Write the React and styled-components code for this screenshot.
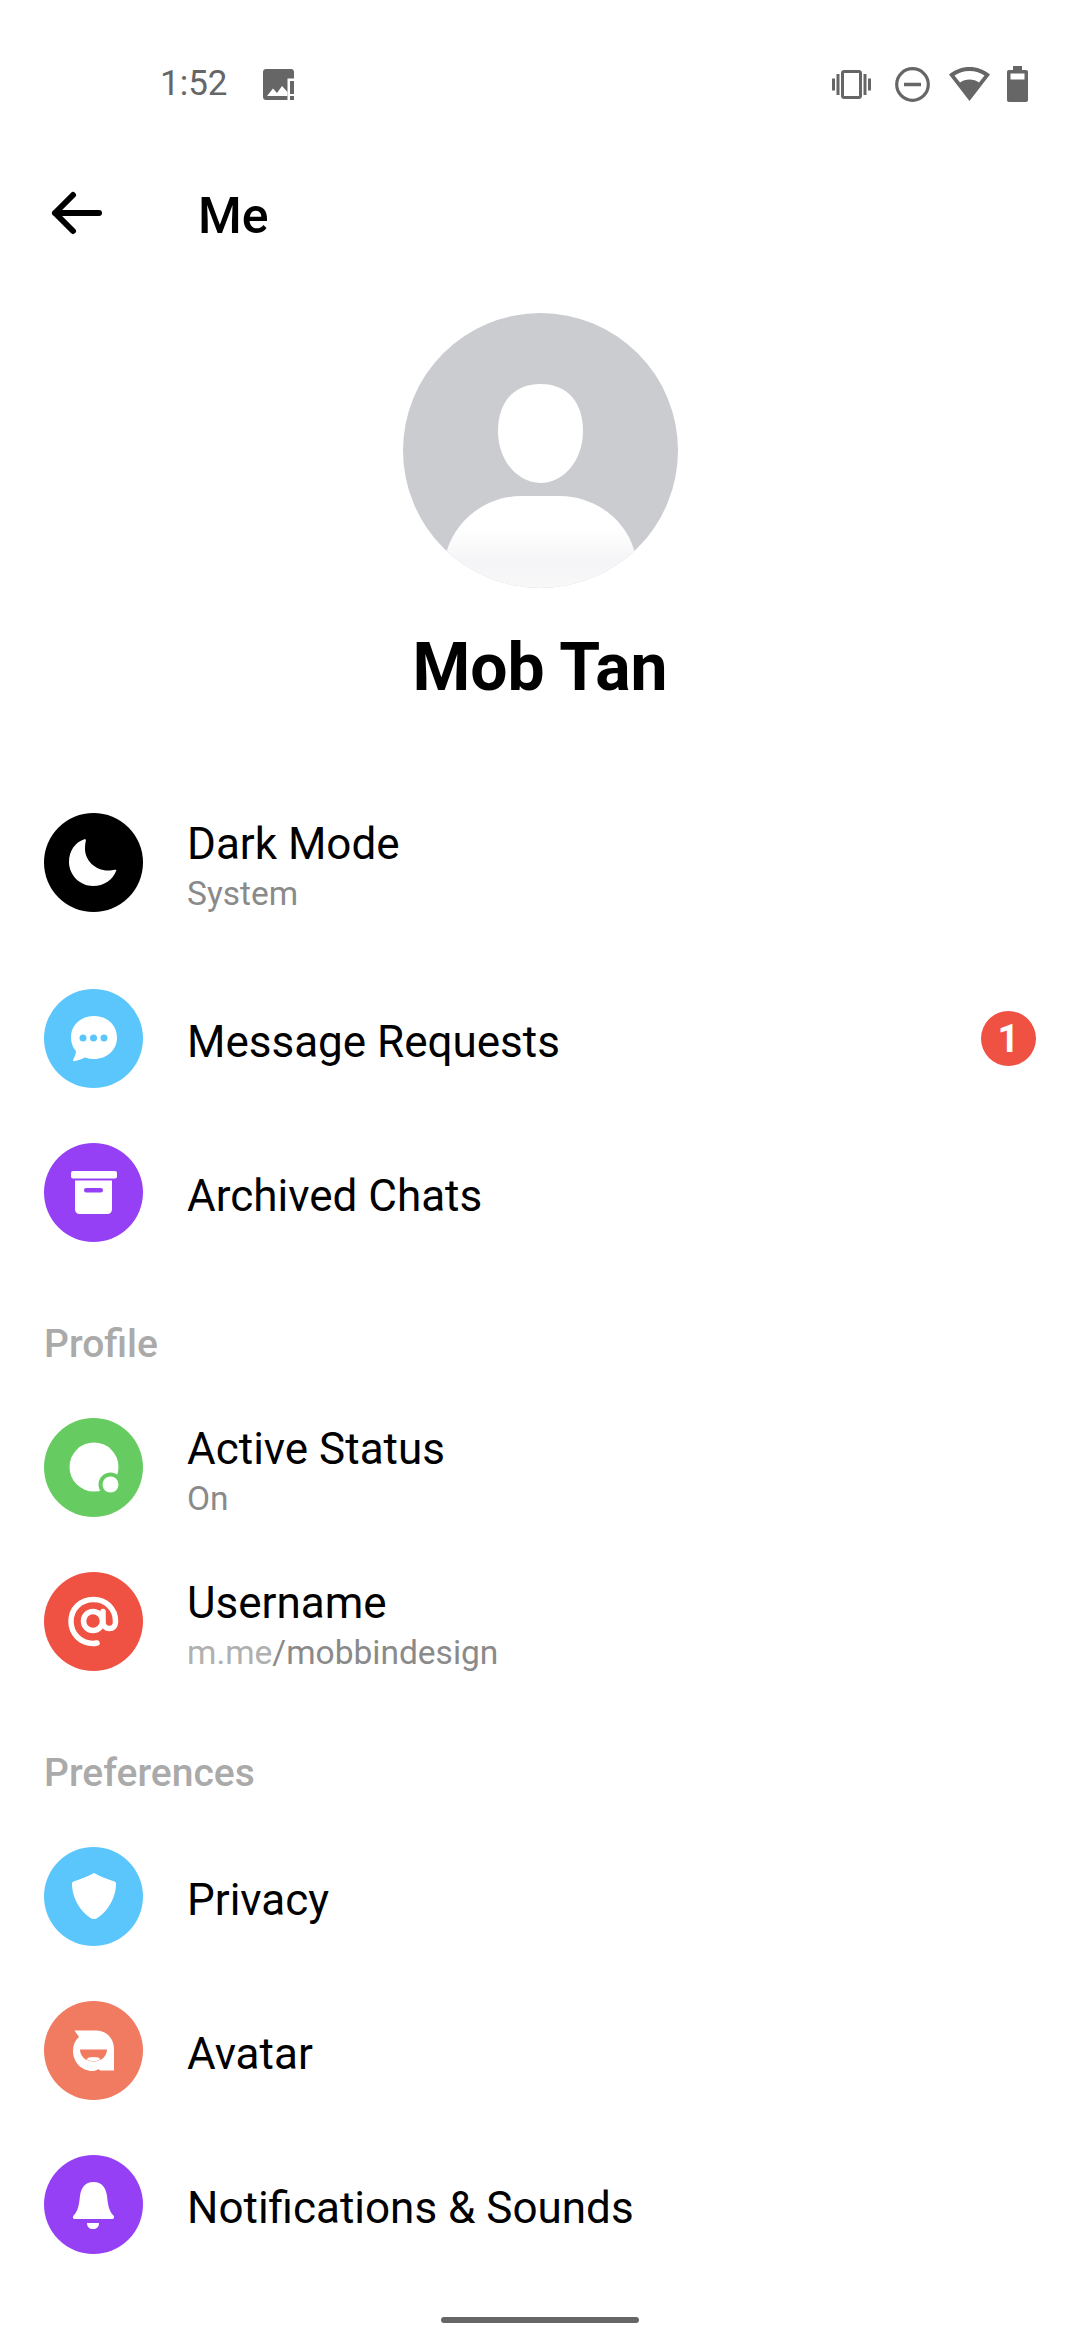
import styled, { createGlobalStyle } from "styled-components";

const GlobalStyle = createGlobalStyle`
  html, body {
    margin: 0;
    padding: 0;
    background: #fff;
  }
  * {
    box-sizing: border-box;
  }
`;

const Screen = styled.div`
  width: 1080px;
  height: 2340px;
  display: flex;
  flex-direction: column;
  background: #fff;
  color: #000;
  font-family: Roboto, "Noto Sans", sans-serif;
  overflow: hidden;
`;

const StatusBar = styled.div`
  height: 168px;
  flex-shrink: 0;
  display: flex;
  align-items: center;
  justify-content: space-between;
  padding: 0 52px 0 160px;
  color: #666;
`;

const StatusLeft = styled.div`
  display: flex;
  align-items: center;
  gap: 35px;
`;

const StatusRight = styled.div`
  display: flex;
  align-items: center;
`;

const Time = styled.span`
  font-size: 35px;
  line-height: 40px;
  font-weight: 400;
`;

const Glyph = styled.svg`
  display: block;
  flex-shrink: 0;
  margin-left: ${(p) => p.$gap || 0}px;
`;

const Header = styled.div`
  height: 90px;
  flex-shrink: 0;
  display: flex;
  align-items: center;
  padding-left: 49px;
`;

const BackIcon = styled.svg`
  width: 54px;
  height: 48px;
  flex-shrink: 0;
  margin-right: 95px;
`;

const HeaderTitle = styled.h1`
  margin: 0;
  padding-top: 5px;
  font-size: 50px;
  font-weight: 500;
  line-height: 56px;
`;

const Profile = styled.div`
  display: flex;
  flex-direction: column;
  align-items: center;
  margin-top: 55px;
  margin-bottom: 106px;
`;

const AvatarImage = styled.svg`
  width: 275px;
  height: 275px;
  display: block;
`;

const ProfileName = styled.h2`
  margin: 41px 0 0;
  font-size: 66px;
  line-height: 78px;
  font-weight: 700;
`;

const List = styled.div`
  display: flex;
  flex-direction: column;
  padding: 0 44px;
`;

const Row = styled.div`
  height: 99px;
  display: flex;
  align-items: center;
  gap: 44px;
  margin-bottom: ${(p) => (p.$tall ? "77px" : "55px")};
`;

const IconCircle = styled.svg`
  width: 99px;
  height: 99px;
  flex-shrink: 0;
  display: block;
`;

const RowText = styled.div`
  flex: 1;
  display: flex;
  flex-direction: column;
  padding-top: 6px;
`;

const RowTitle = styled.div`
  font-size: 44px;
  line-height: 50px;
`;

const RowSub = styled.div`
  font-size: 33.5px;
  line-height: 38px;
  margin-top: 6px;
  color: #8a8a8a;
`;

const SubMuted = styled.span`
  color: #b0b0b0;
`;

const SectionTitle = styled.div`
  height: 66px;
  padding-top: 25px;
  font-size: 39px;
  line-height: 44px;
  font-weight: 500;
  color: #aaa;
  margin-bottom: 55px;
`;

const Badge = styled.div`
  width: 55px;
  height: 55px;
  border-radius: 50%;
  background: #ef5142;
  color: #fff;
  display: flex;
  align-items: center;
  justify-content: center;
  font-size: 38px;
  font-weight: 700;
`;

const HomeBar = styled.div`
  margin-top: auto;
  margin-bottom: 17px;
  align-self: center;
  width: 198px;
  height: 6px;
  border-radius: 3px;
  background: #666;
`;

const Circle = ({ bg, children }) => (
  <IconCircle viewBox="0 0 99 99">
    <circle cx="49.5" cy="49.5" r="49.5" fill={bg} />
    {children}
  </IconCircle>
);

const MoonIcon = () => (
  <Circle bg="#000">
    <path
      fill="#fff"
      d="M41 26C31 29 25 38 25 49C25 62 36 73 49 73C60 73 69 67 72.5 57C70 56 68 57.5 64 57.5C51 57.5 41 47 41 36C41 32 41.5 29 42 27Z"
    />
  </Circle>
);

const BubbleIcon = () => (
  <Circle bg="#5ac6fc">
    <path
      fill="#fff"
      d="M50 27C37 27 27 36 27 48.5C27 54 29 59 32 62C32 65 30.500 68 29 71C29 72 30 72.500 31 72C35 71 38 70 41 68.500C44 69.500 47 70 50 70C63 70 73 61 73 48.500C73 36 63 27 50 27Z"
    />
    <circle cx="39" cy="49" r="3.500" fill="#5ac6fc" />
    <circle cx="49.500" cy="49" r="3.500" fill="#5ac6fc" />
    <circle cx="60" cy="49" r="3.500" fill="#5ac6fc" />
  </Circle>
);

const ArchiveIcon = () => (
  <Circle bg="#9640f5">
    <rect x="27" y="28" width="46" height="7.500" rx="2" fill="#fff" />
    <path
      fill="#fff"
      d="M31 37.500H68V66.500C68 69 66 71 63.500 71H35.500C33 71 31 69 31 66.500Z"
    />
    <rect x="40" y="45" width="19" height="4.500" rx="2.200" fill="#9640f5" />
  </Circle>
);

const ActiveIcon = () => (
  <Circle bg="#66cc61">
    <circle cx="50" cy="49" r="24.500" fill="#fff" />
    <circle cx="66.500" cy="66.500" r="12" fill="#66cc61" />
    <circle cx="66.500" cy="66.500" r="8" fill="#fff" />
  </Circle>
);

const AtIcon = () => (
  <Circle bg="#ef5142">
    <g fill="none" stroke="#fff" strokeWidth="5.500" strokeLinecap="round">
      <circle cx="49" cy="49" r="9.500" />
      <path d="M53 71C51.500 71.300 50.500 71.500 49 71.500C36.500 71.500 27 61.500 27 49.500C27 37 36.500 27.500 49.500 27.500C62 27.500 71.500 37 71.500 49V50C71.500 54 69 56.500 65.500 56.500C62 56.500 59 54 59 50V39.500" />
    </g>
  </Circle>
);

const ShieldIcon = () => (
  <Circle bg="#5ac6fc">
    <path
      fill="#fff"
      d="M50 26C44 29.500 36 32.500 29.500 34.500C28.300 35 28 36 28 37C28 51 37 65.500 47.500 71.500C49 72.300 51 72.300 52.500 71.500C63 65.500 72 51 72 37C72 36 71.700 35 70.500 34.500C64 32.500 56 29.500 50 26Z"
    />
  </Circle>
);

const FaceIcon = () => (
  <Circle bg="#f07b61">
    <path
      fill="#fff"
      d="M30.500 29.500H52C63 29.500 70 38 70 48V69.500H56L54.500 68C52.500 69.500 50.500 70 48.500 70C37.500 70 29 61 29 50C29 44 31 39.500 35 36Z"
    />
    <path fill="#f07b61" d="M36 48.500H63C63 55.500 57 60.500 49.500 60.500C42 60.500 36 55.500 36 48.500Z" />
    <ellipse cx="49.500" cy="58" rx="6.500" ry="2" fill="#fff" />
  </Circle>
);

const BellIcon = () => (
  <Circle bg="#9640f5">
    <path
      fill="#fff"
      d="M49.500 27C41 27 37 33 36 41C35 50 34 56 30 60C28 62 29 64 31 64H68C70 64 71 62 69 60C65 56 64 50 63 41C62 33 58 27 49.500 27Z"
    />
    <path fill="#fff" d="M43 68H55C55 72 52.500 74 49 74C45.500 74 43 72 43 68Z" />
  </Circle>
);

const App = () => {
  return (
    <Screen>
      <GlobalStyle />
      <StatusBar>
        <StatusLeft>
          <Time>1:52</Time>
          <Glyph width="31" height="31" viewBox="0 0 31 31">
            <path
              fill="currentColor"
              d="M3 0H28C29.700 0 31 1.300 31 3V9.500H24.500V31H3C1.300 31 0 29.700 0 28V3C0 1.300 1.300 0 3 0Z"
            />
            <path fill="#fff" d="M4 27L10 19.500L14 24L19 17L24.500 23V27Z" />
            <rect x="27" y="12" width="4" height="13" fill="currentColor" />
            <rect x="27" y="27" width="4" height="4" fill="currentColor" />
          </Glyph>
        </StatusLeft>
        <StatusRight>
          <Glyph width="39" height="29" viewBox="0 0 39 29" fill="currentColor">
            <path
              fillRule="evenodd"
              d="M12 0H27C28.500 0 30 1.300 30 3V26C30 27.700 28.500 29 27 29H12C10.500 29 9 27.700 9 26V3C9 1.300 10.500 0 12 0ZM12 3V26H27V3Z"
            />
            <rect x="4.500" y="4" width="3" height="21" />
            <rect x="0" y="8.500" width="3" height="12" />
            <rect x="31.500" y="4" width="3" height="21" />
            <rect x="36" y="8.500" width="3" height="12" />
          </Glyph>
          <Glyph $gap={24} width="35" height="35" viewBox="0 0 35 35" fill="none" stroke="currentColor">
            <circle cx="17.500" cy="17.500" r="15.800" strokeWidth="3.200" />
            <path d="M9 17.500H26" strokeWidth="3.500" />
          </Glyph>
          <Glyph $gap={19} width="41" height="35" viewBox="0 0 41 35" fill="currentColor">
            <path
              fillRule="evenodd"
              d="M20.500 0C28 0 35 2.500 41 7.500L20.500 34L0 7.500C6 2.500 13 0 20.500 0ZM20.500 4C14.500 4 9.500 5.800 5.500 8.500L11 15.500C13.500 13.500 17 12.500 20.500 12.500C24 12.500 27.500 13.500 30 15.500L35.500 8.500C31.500 5.800 26.500 4 20.500 4Z"
            />
          </Glyph>
          <Glyph $gap={17} width="21" height="36" viewBox="0 0 21 36" fill="currentColor">
            <path
              fillRule="evenodd"
              d="M6 0H15V4H19C20.200 4 21 4.800 21 6V34C21 35.200 20.200 36 19 36H2C0.800 36 0 35.200 0 34V6C0 4.800 0.800 4 2 4H6ZM3.500 7.500V13.500H17.500V7.500Z"
            />
          </Glyph>
        </StatusRight>
      </StatusBar>

      <Header>
        <BackIcon viewBox="0 0 54 48" fill="none" stroke="#000" strokeWidth="6" strokeLinecap="round" strokeLinejoin="round">
          <path d="M50 24H6M24 6L6 24L24 42" />
        </BackIcon>
        <HeaderTitle>Me</HeaderTitle>
      </Header>

      <Profile>
        <AvatarImage viewBox="0 0 275 275">
          <defs>
            <clipPath id="avatarClip">
              <circle cx="137.500" cy="137.500" r="137.500" />
            </clipPath>
            <linearGradient id="bodyFade" x1="0" y1="0" x2="0" y2="1">
              <stop offset="0.350" stopColor="#fff" />
              <stop offset="0.700" stopColor="#f5f5f7" />
              <stop offset="1" stopColor="#f8f8f9" />
            </linearGradient>
          </defs>
          <circle cx="137.500" cy="137.500" r="137.500" fill="#cbccd0" />
          <path
            fill="#fff"
            d="M137.500 71C165 71 180 90 180 118C180 148 160 170 137.500 170C115 170 95 148 95 118C95 90 110 71 137.500 71Z"
          />
          <path
            clipPath="url(#avatarClip)"
            fill="url(#bodyFade)"
            d="M44 275V237C54 205 85 183 118 183H157C190 183 222 205 231 237V275Z"
          />
        </AvatarImage>
        <ProfileName>Mob Tan</ProfileName>
      </Profile>

      <List>
        <Row $tall>
          <MoonIcon />
          <RowText>
            <RowTitle>Dark Mode</RowTitle>
            <RowSub>System</RowSub>
          </RowText>
        </Row>
        <Row>
          <BubbleIcon />
          <RowText>
            <RowTitle>Message Requests</RowTitle>
          </RowText>
          <Badge>1</Badge>
        </Row>
        <Row>
          <ArchiveIcon />
          <RowText>
            <RowTitle>Archived Chats</RowTitle>
          </RowText>
        </Row>

        <SectionTitle>Profile</SectionTitle>
        <Row>
          <ActiveIcon />
          <RowText>
            <RowTitle>Active Status</RowTitle>
            <RowSub>On</RowSub>
          </RowText>
        </Row>
        <Row>
          <AtIcon />
          <RowText>
            <RowTitle>Username</RowTitle>
            <RowSub>
              <SubMuted>m.me</SubMuted>/mobbindesign
            </RowSub>
          </RowText>
        </Row>

        <SectionTitle>Preferences</SectionTitle>
        <Row>
          <ShieldIcon />
          <RowText>
            <RowTitle>Privacy</RowTitle>
          </RowText>
        </Row>
        <Row>
          <FaceIcon />
          <RowText>
            <RowTitle>Avatar</RowTitle>
          </RowText>
        </Row>
        <Row>
          <BellIcon />
          <RowText>
            <RowTitle>Notifications &amp; Sounds</RowTitle>
          </RowText>
        </Row>
      </List>

      <HomeBar />
    </Screen>
  );
};

export default App;
